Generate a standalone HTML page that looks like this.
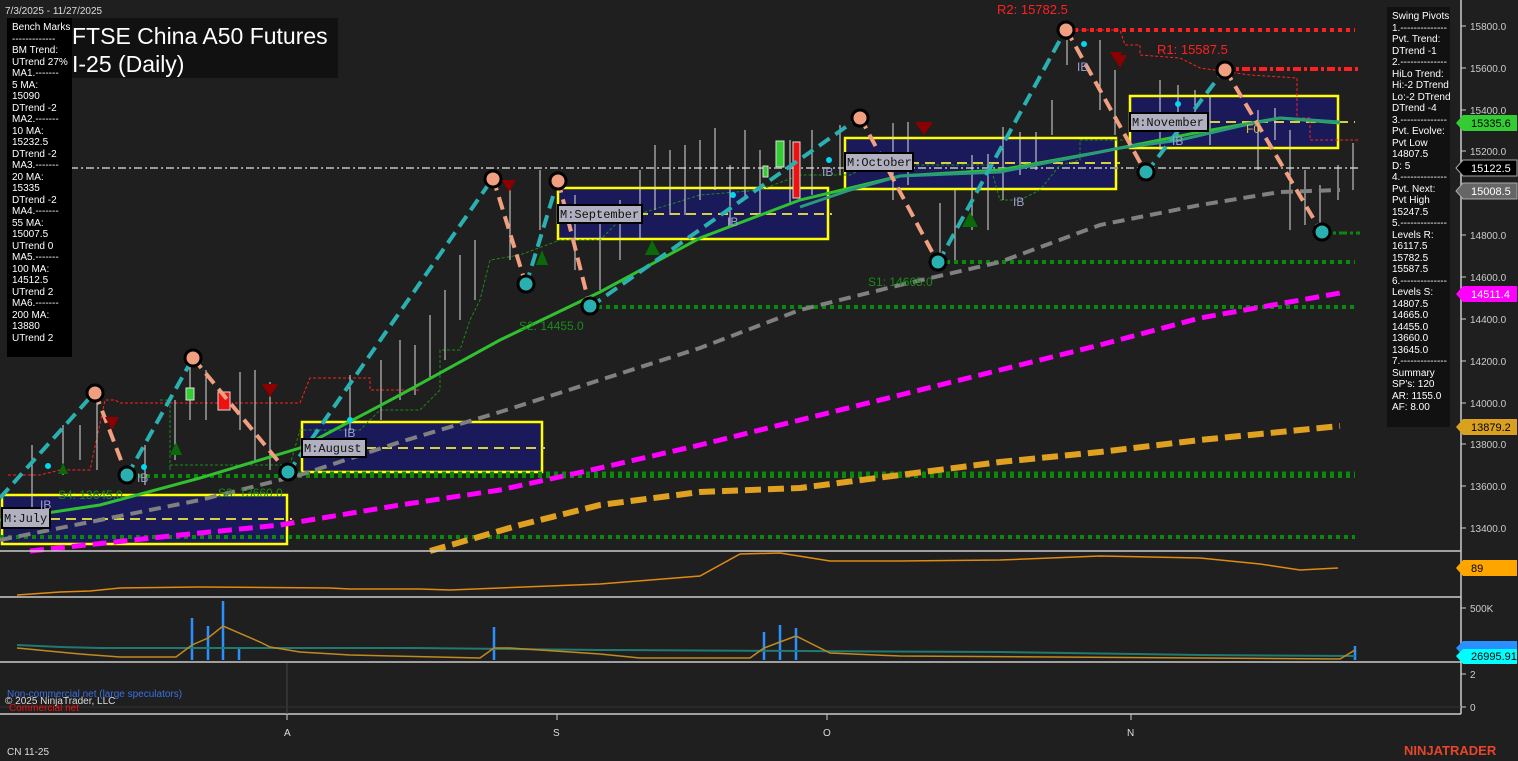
<!DOCTYPE html>
<html><head><meta charset="utf-8"><style>
html,body{margin:0;padding:0;background:#1f1f1f;width:1518px;height:761px;overflow:hidden;font-family:"Liberation Sans",sans-serif}
svg{position:absolute;left:0;top:0}
.bx{position:absolute;background:#000;color:#fff;font-size:10px;line-height:11.5px;padding:4px 5px;box-sizing:border-box;white-space:nowrap;overflow:hidden}
</style></head><body>
<svg width="1518" height="761" xmlns="http://www.w3.org/2000/svg" font-family="Liberation Sans, sans-serif">
<g stroke="#ffff00" stroke-width="2.5" fill="#1a1a5a">
<rect x="2" y="495" width="285" height="49"/>
<rect x="302" y="422" width="240" height="50"/>
<rect x="558" y="188" width="270" height="51"/>
<rect x="845" y="138" width="271" height="51"/>
<rect x="1130" y="96" width="208" height="52"/>
</g>
<g stroke="#d8d040" stroke-width="2" stroke-dasharray="10,6">
<line x1="2" y1="519" x2="292" y2="519"/><line x1="302" y1="448" x2="545" y2="448"/>
<line x1="558" y1="214" x2="832" y2="214"/><line x1="845" y1="163" x2="1120" y2="163"/>
<line x1="1130" y1="122" x2="1355" y2="122"/>
</g>
<line x1="70" y1="168" x2="1360" y2="168" stroke="#999" stroke-width="2" stroke-dasharray="8,3,2,3"/>
<g fill="none">
<line x1="1066" y1="30" x2="1355" y2="30" stroke="#ff2020" stroke-width="4" stroke-dasharray="4,4"/>
<line x1="1225" y1="69" x2="1358" y2="69" stroke="#ff2020" stroke-width="4" stroke-dasharray="8,3,3,3"/>
<line x1="938" y1="262" x2="1355" y2="262" stroke="#0a8a0a" stroke-width="4" stroke-dasharray="4,4"/>
<line x1="590" y1="307" x2="1355" y2="307" stroke="#0a8a0a" stroke-width="4" stroke-dasharray="4,4"/>
<line x1="130" y1="476" x2="1355" y2="476" stroke="#0a8a0a" stroke-width="4" stroke-dasharray="4,4"/>
<line x1="290" y1="473" x2="1355" y2="473" stroke="#0a8a0a" stroke-width="3" stroke-dasharray="4,4"/>
<line x1="0" y1="537" x2="1355" y2="537" stroke="#0a8a0a" stroke-width="4" stroke-dasharray="4,4"/>
<line x1="1322" y1="233" x2="1360" y2="233" stroke="#0a8a0a" stroke-width="3" stroke-dasharray="8,3,3,3"/>
<polyline points="1066,30 1120,30 1125,45 1140,45 1140,55 1180,58 1200,68 1250,75 1297,78 1297,118 1310,118 1310,140 1360,140" stroke="#ff2020" stroke-width="1" stroke-dasharray="3,2"/>
<polyline points="8,475 40,475 60,470 90,470 105,400 115,400 120,403 170,403 300,403 310,378 370,378 370,390 420,390" stroke="#ff2020" stroke-width="1" stroke-dasharray="3,2"/>
<polyline points="160,400 170,400 170,470 170,465 290,465 300,430 360,430 380,410 420,410 440,390 440,350 460,350 470,320 480,300 490,260 520,255 560,240 600,240 620,220 700,195 760,190 800,175 850,175 870,165 990,165 1000,200 1020,200 1040,190 1060,165 1080,160 1080,140 1125,140" stroke="#1a8a1a" stroke-width="1" stroke-dasharray="3,2"/>
</g>
<g stroke="#ddd" stroke-width="1">
<line x1="32" y1="445" x2="32" y2="520"/><line x1="63" y1="425" x2="63" y2="475"/><line x1="80" y1="425" x2="80" y2="460"/><line x1="97" y1="392" x2="97" y2="470"/><line x1="145" y1="445" x2="145" y2="485"/><line x1="175" y1="400" x2="175" y2="460"/><line x1="190" y1="358" x2="190" y2="420"/><line x1="206" y1="370" x2="206" y2="420"/><line x1="240" y1="372" x2="240" y2="430"/><line x1="255" y1="370" x2="255" y2="460"/><line x1="270" y1="382" x2="270" y2="470"/><line x1="350" y1="375" x2="350" y2="430"/><line x1="381" y1="360" x2="381" y2="420"/><line x1="400" y1="340" x2="400" y2="400"/><line x1="415" y1="345" x2="415" y2="395"/><line x1="430" y1="315" x2="430" y2="380"/><line x1="445" y1="290" x2="445" y2="360"/><line x1="460" y1="255" x2="460" y2="320"/><line x1="475" y1="240" x2="475" y2="300"/><line x1="510" y1="190" x2="510" y2="260"/><line x1="540" y1="170" x2="540" y2="230"/><line x1="575" y1="195" x2="575" y2="270"/><line x1="600" y1="215" x2="600" y2="290"/><line x1="620" y1="200" x2="620" y2="260"/><line x1="640" y1="170" x2="640" y2="240"/><line x1="655" y1="145" x2="655" y2="210"/><line x1="670" y1="150" x2="670" y2="215"/><line x1="685" y1="145" x2="685" y2="215"/><line x1="700" y1="140" x2="700" y2="200"/><line x1="715" y1="128" x2="715" y2="190"/><line x1="730" y1="165" x2="730" y2="225"/><line x1="745" y1="130" x2="745" y2="200"/><line x1="760" y1="150" x2="760" y2="215"/><line x1="790" y1="140" x2="790" y2="205"/><line x1="812" y1="130" x2="812" y2="195"/><line x1="840" y1="125" x2="840" y2="175"/><line x1="893" y1="123" x2="893" y2="200"/><line x1="908" y1="122" x2="908" y2="185"/><line x1="940" y1="203" x2="940" y2="265"/><line x1="955" y1="189" x2="955" y2="260"/><line x1="972" y1="155" x2="972" y2="230"/><line x1="988" y1="154" x2="988" y2="230"/><line x1="1003" y1="127" x2="1003" y2="200"/><line x1="1020" y1="132" x2="1020" y2="175"/><line x1="1036" y1="132" x2="1036" y2="170"/><line x1="1052" y1="100" x2="1052" y2="135"/><line x1="1067" y1="40" x2="1067" y2="65"/><line x1="1100" y1="40" x2="1100" y2="110"/><line x1="1115" y1="70" x2="1115" y2="135"/><line x1="1160" y1="80" x2="1160" y2="150"/><line x1="1178" y1="85" x2="1178" y2="135"/><line x1="1195" y1="90" x2="1195" y2="130"/><line x1="1210" y1="95" x2="1210" y2="145"/><line x1="1258" y1="110" x2="1258" y2="170"/><line x1="1275" y1="108" x2="1275" y2="140"/><line x1="1290" y1="130" x2="1290" y2="230"/><line x1="1305" y1="170" x2="1305" y2="225"/><line x1="1320" y1="185" x2="1320" y2="230"/><line x1="1338" y1="165" x2="1338" y2="200"/><line x1="1353" y1="143" x2="1353" y2="190"/>
</g>
<g stroke="#ddd" stroke-width="1">
<rect x="186" y="388" width="8" height="12" fill="#33cc33"/><rect x="218" y="392" width="12" height="18" fill="#ee1111"/>
<rect x="776" y="141" width="8" height="26" fill="#33cc33"/><rect x="793" y="142" width="7" height="56" fill="#ee1111"/>
<rect x="763" y="166" width="5" height="11" fill="#33cc33"/>
</g>
<g fill="none" stroke-linecap="butt">
<polyline points="30,551 180,535 280,525 400,505 500,490 600,468 700,445 800,420 900,395 1000,370 1100,345 1200,318 1340,293" stroke="#ff00ff" stroke-width="5" stroke-dasharray="14,7"/>
<polyline points="430,551 520,525 600,505 700,492 800,488 900,475 1000,462 1100,452 1200,440 1340,426" stroke="#e0a020" stroke-width="6" stroke-dasharray="16,7"/>
<polyline points="0,540 100,520 200,500 300,475 400,442 500,412 600,380 700,348 800,310 900,285 1000,262 1100,225 1200,205 1280,192 1340,190" stroke="#808080" stroke-width="4" stroke-dasharray="12,7"/>
<polyline points="0,520 100,505 200,478 300,448 400,395 500,340 600,292 700,238 800,200 900,176 1000,170 1100,152 1200,132 1280,118 1340,123" stroke="#30c030" stroke-width="3"/>
<polyline points="800,207 850,190 900,176 1000,172 1060,160 1120,148 1180,140 1240,126 1280,118 1340,122" stroke="#2a9a7a" stroke-width="3"/>
</g>
<g fill="none" stroke-width="4" stroke-dasharray="13,7">
<g stroke="#2ab0b0"><line x1="0" y1="498" x2="95" y2="392"/><line x1="127" y1="476" x2="193" y2="358"/><line x1="288" y1="473" x2="493" y2="178"/><line x1="526" y1="285" x2="558" y2="180"/><line x1="590" y1="307" x2="860" y2="117"/><line x1="938" y1="263" x2="1066" y2="29"/><line x1="1146" y1="173" x2="1225" y2="69"/></g>
<g stroke="#f0a080"><line x1="95" y1="392" x2="127" y2="476"/><line x1="193" y1="358" x2="288" y2="473"/><line x1="493" y1="178" x2="526" y2="285"/><line x1="558" y1="180" x2="590" y2="307"/><line x1="860" y1="117" x2="938" y2="263"/><line x1="1066" y1="29" x2="1146" y2="173"/><line x1="1225" y1="69" x2="1322" y2="233"/></g>
</g>
<g stroke="#000" stroke-width="3">
<circle cx="95" cy="393" r="8" fill="#f0a080"/><circle cx="193" cy="358" r="8" fill="#f0a080"/><circle cx="493" cy="179" r="8" fill="#f0a080"/><circle cx="558" cy="181" r="8" fill="#f0a080"/><circle cx="860" cy="118" r="8" fill="#f0a080"/><circle cx="1066" cy="30" r="8" fill="#f0a080"/><circle cx="1225" cy="70" r="8" fill="#f0a080"/>
<circle cx="127" cy="475" r="8" fill="#2ab0b0"/><circle cx="288" cy="472" r="8" fill="#2ab0b0"/><circle cx="526" cy="284" r="8" fill="#2ab0b0"/><circle cx="590" cy="306" r="8" fill="#2ab0b0"/><circle cx="938" cy="262" r="8" fill="#2ab0b0"/><circle cx="1146" cy="172" r="8" fill="#2ab0b0"/><circle cx="1322" cy="232" r="8" fill="#2ab0b0"/>
</g>
<g fill="#8b0000"><polygon points="105,417 119,417 112,430"/><polygon points="262,384 278,384 270,397"/><polygon points="502,180 516,180 509,192"/><polygon points="915,122 933,122 924,135"/><polygon points="1110,52 1122,52 1116,62"/><polygon points="1113,55 1127,55 1120,68"/></g>
<g fill="#0a6a0a"><polygon points="58,474 68,474 63,463"/><polygon points="170,455 182,455 176,442"/><polygon points="645,255 660,255 652,240"/><polygon points="962,227 978,227 970,212"/><polygon points="536,265 548,265 542,250"/></g>
<g fill="#00d8f0"><circle cx="48" cy="466" r="3"/><circle cx="144" cy="467" r="3"/><circle cx="350" cy="420" r="3"/><circle cx="733" cy="195" r="3"/><circle cx="829" cy="160" r="3"/><circle cx="1084" cy="44" r="3"/><circle cx="1178" cy="104" r="3"/></g>
<g font-family="Liberation Mono, monospace" font-size="12" fill="#111">
<rect x="2" y="508" width="48" height="20" fill="#b0b0c0" stroke="#000" stroke-width="2"/><text x="4" y="522">M:July</text>
<rect x="302" y="439" width="64" height="18" fill="#b0b0c0" stroke="#000" stroke-width="2"/><text x="304" y="452">M:August</text>
<rect x="558" y="205" width="84" height="18" fill="#b0b0c0" stroke="#000" stroke-width="2"/><text x="560" y="218">M:September</text>
<rect x="845" y="153" width="68" height="18" fill="#b0b0c0" stroke="#000" stroke-width="2"/><text x="847" y="166">M:October</text>
<rect x="1130" y="113" width="78" height="18" fill="#b0b0c0" stroke="#000" stroke-width="2"/><text x="1132" y="126">M:November</text>
</g>
<g font-size="12" fill="#a0a0d0"><text x="40" y="509">IB</text><text x="137" y="482">IB</text><text x="344" y="437">IB</text><text x="727" y="226">IB</text><text x="822" y="176">IB</text><text x="1013" y="206">IB</text><text x="1077" y="71">IB</text><text x="1172" y="145">IB</text></g>
<text x="1246" y="133" font-size="12" fill="#d8c040">F0</text>
<g font-size="12" fill="#1a8a1a"><text x="868" y="286">S1: 14665.0</text><text x="519" y="330">S2: 14455.0</text><text x="58" y="499">S4: 13645.0</text><text x="218" y="497">S3: 13660.0</text></g>
<text x="997" y="14" font-size="13" fill="#ff2020">R2: 15782.5</text>
<text x="1157" y="54" font-size="13" fill="#ff2020">R1: 15587.5</text>
<rect x="70" y="18" width="268" height="60" fill="#111"/>
<text x="72" y="44" font-size="23" fill="#fff">FTSE China A50 Futures</text>
<text x="72" y="72" font-size="23" fill="#fff">I-25 (Daily)</text>
<text x="5" y="14" font-size="10" fill="#ddd">7/3/2025 - 11/27/2025</text>
<g stroke="#ccc" stroke-width="1.5"><line x1="0" y1="551" x2="1461" y2="551"/><line x1="0" y1="597" x2="1461" y2="597"/><line x1="0" y1="662" x2="1461" y2="662"/><line x1="0" y1="714" x2="1461" y2="714"/><line x1="1461" y1="0" x2="1461" y2="714"/></g>
<line x1="287" y1="663" x2="287" y2="714" stroke="#444"/><line x1="0" y1="707" x2="1461" y2="707" stroke="#333"/>
<polyline points="17,595 60,592 90,591 120,588 200,587 330,588 350,589 420,589 450,590 500,588 600,584 700,576 740,554 780,553 830,561 900,561 1000,560 1100,556 1200,558 1260,564 1300,570 1338,568" fill="none" stroke="#e08a10" stroke-width="1.5"/>
<g stroke="#2a90ff" stroke-width="2.5"><line x1="192" y1="618" x2="192" y2="660"/><line x1="208" y1="626" x2="208" y2="660"/><line x1="223" y1="601" x2="223" y2="660"/><line x1="239" y1="647" x2="239" y2="660"/><line x1="494" y1="627" x2="494" y2="660"/><line x1="764" y1="632" x2="764" y2="660"/><line x1="780" y1="625" x2="780" y2="660"/><line x1="796" y1="628" x2="796" y2="660"/><line x1="1355" y1="646" x2="1355" y2="660"/></g>
<polyline points="17,645 60,647 100,648 415,648 600,650 800,651 1000,652 1200,655 1355,656" fill="none" stroke="#207a70" stroke-width="2"/>
<polyline points="17,648 80,654 120,657 176,657 192,645 208,638 223,626 260,642 270,647 300,652 350,655 480,658 494,648 510,648 600,654 640,658 750,658 764,648 780,642 796,636 830,653 900,656 1200,658 1340,659 1355,650" fill="none" stroke="#c08a20" stroke-width="1.5"/>
<text x="7" y="697" font-size="10" fill="#3a70e0">Non-commercial net (large speculators)</text>
<text x="9" y="711" font-size="10" fill="#ee1111">Commercial net</text>
<text x="5" y="704" font-size="10" fill="#ddd">© 2025 NinjaTrader, LLC</text>
<g font-size="10" fill="#ddd"><text x="284" y="736">A</text><text x="553" y="736">S</text><text x="823" y="736">O</text><text x="1127" y="736">N</text><text x="7" y="755">CN 11-25</text></g>
<g stroke="#ccc"><line x1="287" y1="714" x2="287" y2="720"/><line x1="557" y1="714" x2="557" y2="720"/><line x1="827" y1="714" x2="827" y2="720"/><line x1="1131" y1="714" x2="1131" y2="720"/></g>
<text x="1404" y="755" font-size="13" font-weight="bold" fill="#e8452a">NINJATRADER</text>
<g font-size="10" fill="#ccc">
<text x="1470" y="30">15800.0</text><text x="1470" y="72">15600.0</text><text x="1470" y="114">15400.0</text><text x="1470" y="155">15200.0</text><text x="1470" y="239">14800.0</text><text x="1470" y="281">14600.0</text><text x="1470" y="323">14400.0</text><text x="1470" y="365">14200.0</text><text x="1470" y="407">14000.0</text><text x="1470" y="448">13800.0</text><text x="1470" y="490">13600.0</text><text x="1470" y="532">13400.0</text><text x="1470" y="612">500K</text><text x="1470" y="678">2</text><text x="1470" y="711">0</text>
</g>
<g stroke="#ccc"><line x1="1461" y1="26" x2="1466" y2="26"/><line x1="1461" y1="68" x2="1466" y2="68"/><line x1="1461" y1="110" x2="1466" y2="110"/><line x1="1461" y1="151" x2="1466" y2="151"/><line x1="1461" y1="235" x2="1466" y2="235"/><line x1="1461" y1="277" x2="1466" y2="277"/><line x1="1461" y1="319" x2="1466" y2="319"/><line x1="1461" y1="361" x2="1466" y2="361"/><line x1="1461" y1="403" x2="1466" y2="403"/><line x1="1461" y1="444" x2="1466" y2="444"/><line x1="1461" y1="486" x2="1466" y2="486"/><line x1="1461" y1="528" x2="1466" y2="528"/><line x1="1461" y1="608" x2="1466" y2="608"/><line x1="1461" y1="674" x2="1466" y2="674"/><line x1="1461" y1="707" x2="1466" y2="707"/></g>
<g font-size="11" fill="#000">
<polygon points="1456,123 1463,115 1517,115 1517,131 1463,131" fill="#33cc33"/><text x="1471" y="127">15335.6</text>
<polygon points="1456,168 1463,160 1517,160 1517,176 1463,176" fill="#000" stroke="#aaa"/><text x="1471" y="172" fill="#fff">15122.5</text>
<polygon points="1456,191 1463,183 1517,183 1517,199 1463,199" fill="#666" stroke="#aaa"/><text x="1471" y="195" fill="#fff">15008.5</text>
<polygon points="1456,294 1463,286 1517,286 1517,302 1463,302" fill="#ff00ff"/><text x="1471" y="298" fill="#fff">14511.4</text>
<polygon points="1456,427 1463,419 1517,419 1517,435 1463,435" fill="#daa020"/><text x="1471" y="431">13879.2</text>
<polygon points="1456,568 1463,560 1517,560 1517,576 1463,576" fill="#ffa500"/><text x="1471" y="572">89</text>
<polygon points="1456,648 1463,641 1517,641 1517,656 1463,656" fill="#2a90ff"/>
<polygon points="1456,656 1463,649 1517,649 1517,664 1463,664" fill="#00ffff"/><text x="1471" y="660">26995.91</text>
</g>
</svg>
<div class="bx" style="left:7px;top:18px;width:65px;height:339px">Bench Marks<br>-------------<br>BM Trend:<br>UTrend 27%<br>MA1.-------<br>5 MA:<br>15090<br>DTrend -2<br>MA2.-------<br>10 MA:<br>15232.5<br>DTrend -2<br>MA3.-------<br>20 MA:<br>15335<br>DTrend -2<br>MA4.-------<br>55 MA:<br>15007.5<br>UTrend 0<br>MA5.-------<br>100 MA:<br>14512.5<br>UTrend 2<br>MA6.-------<br>200 MA:<br>13880<br>UTrend 2</div>
<div class="bx" style="left:1387px;top:7px;width:63px;height:420px;background:#111">Swing Pivots<br>1.--------------<br>Pvt. Trend:<br>DTrend -1<br>2.--------------<br>HiLo Trend:<br>Hi:-2 DTrend<br>Lo:-2 DTrend<br>DTrend -4<br>3.--------------<br>Pvt. Evolve:<br>Pvt Low<br>14807.5<br>D: 5<br>4.--------------<br>Pvt. Next:<br>Pvt High<br>15247.5<br>5.--------------<br>Levels R:<br>16117.5<br>15782.5<br>15587.5<br>6.--------------<br>Levels S:<br>14807.5<br>14665.0<br>14455.0<br>13660.0<br>13645.0<br>7.--------------<br>Summary<br>SP's: 120<br>AR: 1155.0<br>AF: 8.00</div>
</body></html>
